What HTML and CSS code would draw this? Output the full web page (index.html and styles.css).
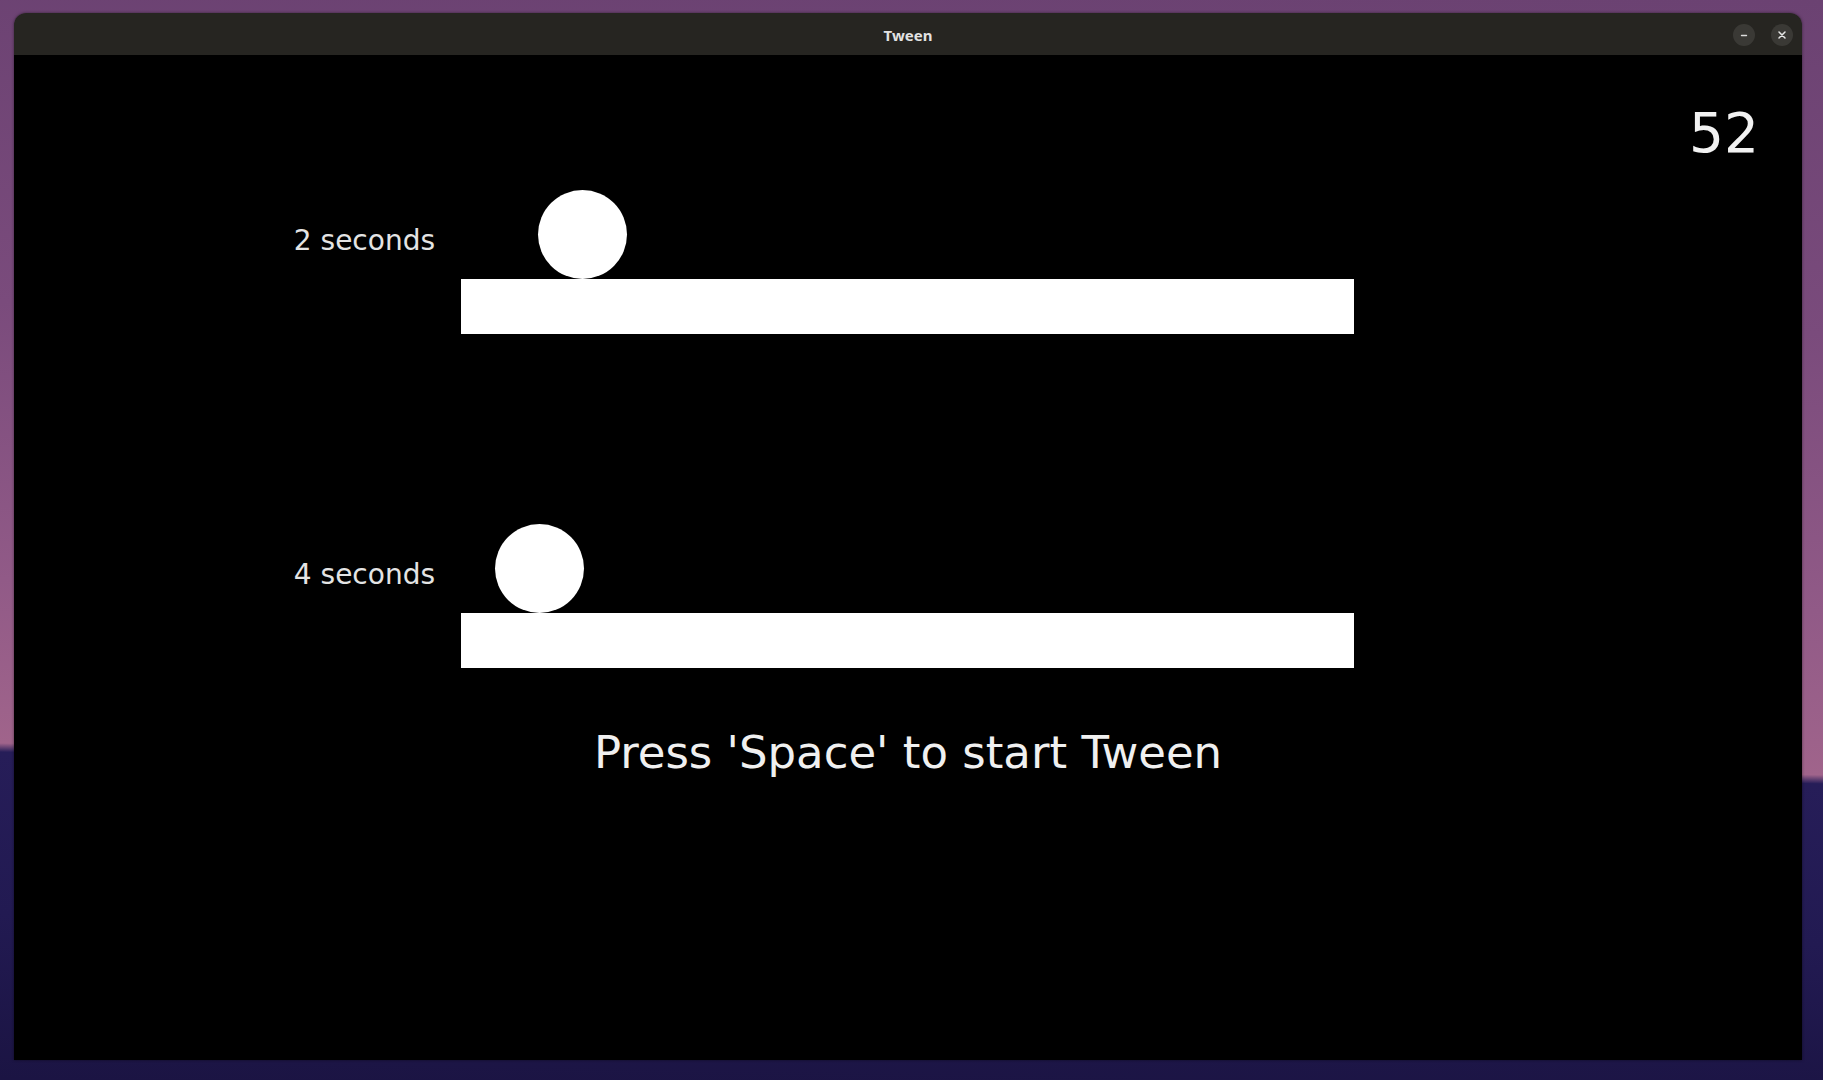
FILE: index.html
```html
<!DOCTYPE html>
<html lang="en">
<head>
<meta charset="utf-8">
<title>Tween</title>
<link rel="stylesheet" href="styles.css">
</head>
<body>
<div class="desktop">
  <div class="window">
    <div class="titlebar">
      <div class="title">Tween</div>
      <div class="controls">
        <span class="wbtn"><svg width="10" height="10" viewBox="0 0 10 10"><path d="M2.5 5.5h5" stroke="#dcdcdc" stroke-width="1.4" stroke-linecap="round"/></svg></span>
        <span class="wbtn"><svg width="10" height="10" viewBox="0 0 10 10"><path d="M2 2l6 6M8 2l-6 6" stroke="#e6e6e6" stroke-width="1.5" stroke-linecap="round"/></svg></span>
      </div>
    </div>
    <div class="canvas">
      <div class="fps">52</div>
      <div class="row">
        <div class="label">2 seconds</div>
        <div class="track">
          <div class="ball" style="margin-left:77px"></div>
          <div class="bar"></div>
        </div>
      </div>
      <div class="row row2">
        <div class="label">4 seconds</div>
        <div class="track">
          <div class="ball" style="margin-left:34px"></div>
          <div class="bar"></div>
        </div>
      </div>
      <div class="hint">Press 'Space' to start Tween</div>
    </div>
  </div>
</div>
</body>
</html>
```
FILE: styles.css
```css
html, body {
  margin: 0;
  padding: 0;
  width: 1823px;
  height: 1080px;
  overflow: hidden;
}
.desktop {
  width: 1823px;
  height: 1080px;
  box-sizing: border-box;
  padding: 13px 0 0 14px;
  background:
    linear-gradient(181deg, #6b4272 0%, #7a4b7c 30%, #915a87 55%, #a0648b 69.7%, #261d58 70.5%, #221a52 85%, #1b1443 100%);
}
.window {
  width: 1788px;
  height: 1047px;
  display: flex;
  flex-direction: column;
  border-radius: 12px 12px 0 0;
  overflow: hidden;
  box-shadow: 0 0 3px rgba(0,0,0,0.5);
}
.titlebar {
  height: 42px;
  flex: none;
  background: #262521;
  display: flex;
  align-items: center;
  justify-content: center;
  position: relative;
}
.title {
  font-family: "Noto Sans", "DejaVu Sans", sans-serif;
  font-weight: 700;
  font-size: 15px;
  color: #e2e2e2;
  margin-top: 2px;
}
.controls {
  position: absolute;
  right: 9px;
  top: 11px;
  display: flex;
  gap: 16px;
}
.wbtn {
  width: 22px;
  height: 22px;
  border-radius: 50%;
  background: #3a3935;
  display: flex;
  align-items: center;
  justify-content: center;
}
.canvas {
  flex: 1;
  background: #000;
  position: relative;
  padding-top: 135px;
  font-family: "DejaVu Sans", sans-serif;
  color: #e8e8e8;
}
.fps {
  position: absolute;
  right: 43px;
  top: 46px;
  font-size: 55px;
  line-height: 64px;
  color: #f2f2f2;
}
.row {
  display: grid;
  grid-template-columns: 421px 893px;
  column-gap: 26px;
}
.row2 {
  margin-top: 190px;
}
.label {
  text-align: right;
  font-size: 28px;
  line-height: 32px;
  margin-top: 35px;
  color: #e4e4e4;
}
.track {
  display: flex;
  flex-direction: column;
}
.ball {
  width: 89px;
  height: 89px;
  border-radius: 50%;
  background: #fff;
}
.bar {
  height: 55px;
  background: #fff;
}
.hint {
  text-align: center;
  font-size: 45px;
  line-height: 50px;
  margin-top: 60px;
  color: #f0f0f0;
}
```
